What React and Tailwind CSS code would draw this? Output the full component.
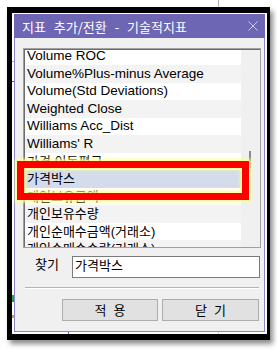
/**
 * Indicator add/switch dialog (지표 추가/전환) inside a framed screenshot,
 * with the selected row called out by a red highlight box.
 */

const ITEMS = [
  'Volume ROC',
  'Volume%Plus-minus Average',
  'Volume(Std Deviations)',
  'Weighted Close',
  'Williams Acc_Dist',
  "Williams' R",
  '가격 이동평균',
  '가격박스',
  '개인보유금액',
  '개인보유수량',
  '개인순매수금액(거래소)',
  '개인순매수수량(거래소)',
];

const SELECTED = 7;

function ListRow({ text, index }) {
  const korean = /[가-힣]/.test(text);
  const bg =
    index === SELECTED ? 'bg-[#d4dbea]' : index % 2 === 1 ? 'bg-[#f3f3f3]' : 'bg-white';
  return (
    <div
      className={`h-[17.5px] pl-[2px] flex items-center whitespace-nowrap text-black ${bg} ${
        korean ? 'text-[13px]' : 'text-[13.5px]'
      }`}
    >
      {text}
    </div>
  );
}

export default function App() {
  return (
    <div className="relative w-[277px] h-[350px] bg-white overflow-hidden pl-[7px] pt-[7px] font-['Liberation_Sans','Noto_Sans_CJK_KR',sans-serif]">
      {/* Black screenshot frame */}
      <div className="w-[263px] h-[333px] border-black border-l-[5px] border-t-[6px] border-r-[3px] border-b-[6px] bg-white pl-[2px] pt-[1px] pr-[2px] pb-[2px] shadow-[3px_4px_5px_rgba(0,0,0,0.45)]">
        <div className="h-full flex flex-col">
          {/* Title bar */}
          <div className="h-[24px] shrink-0 bg-[#6c66b4] flex items-center justify-between pl-[8px] pr-[7px]">
            <span className="text-white text-[13px] leading-none font-['Noto_Sans_CJK_KR',sans-serif] [word-spacing:5px] whitespace-pre">
              지표 추가/전환 - 기술적지표
            </span>
            <svg width="10" height="10" viewBox="0 0 10 10" className="text-[#cdc9ea]">
              <path d="M0.5 0.5 L9.5 9.5 M9.5 0.5 L0.5 9.5" stroke="currentColor" strokeWidth="1" />
            </svg>
          </div>

          {/* Body */}
          <div className="flex-1 flex flex-col bg-[#f0f0f0] border border-t-0 border-[#8b86c8]">
            {/* List box */}
            <div className="mt-[10px] ml-[8px] w-[238px] h-[200px] border border-[#a0a0a0] bg-white">
              <div className="h-full flex border-l border-t border-[#6d6d6d]">
                <div className="w-[216px] overflow-hidden">
                  <div className="-mt-[2.5px]">
                    {ITEMS.map((t, i) => (
                      <ListRow key={t} text={t} index={i} />
                    ))}
                  </div>
                </div>
                {/* Scroll track with thin thumb */}
                <div className="flex-1 bg-[#f0f0f0] pt-[101px]">
                  <div className="ml-[8px] w-[2px] h-[17px] bg-[#8a8a8a]" />
                </div>
              </div>
            </div>

            {/* Search row */}
            <div className="mt-[8px] flex items-start">
              <span className="ml-[20px] w-[25px] text-[13px] leading-[15px] text-black font-['Noto_Sans_CJK_KR',sans-serif]">
                찾기
              </span>
              <div className="ml-[12px] w-[188px] h-[22px] bg-white border border-[#7a7a7a] pl-[2px] text-[13px] leading-[15px] text-black font-['Noto_Sans_CJK_KR',sans-serif]">
                가격박스
              </div>
            </div>

            {/* Separator */}
            <div className="mt-[9px] ml-[10px] w-[234px] border-t border-[#b4b4b4] border-b border-b-white" />

            {/* Buttons */}
            <div className="mt-[10px] ml-[47px] flex gap-[4px]">
              <button className="w-[96px] h-[22px] bg-[#e1e1e1] border border-[#adadad] text-[13px] text-black font-['Noto_Sans_CJK_KR',sans-serif] [word-spacing:4px] whitespace-pre">
                적 용
              </button>
              <button className="w-[97px] h-[22px] bg-[#e1e1e1] border border-[#adadad] text-[13px] text-black font-['Noto_Sans_CJK_KR',sans-serif] [word-spacing:4px] whitespace-pre">
                닫 기
              </button>
            </div>
          </div>
        </div>
      </div>

      {/* Bits of the chart behind, showing between the frame and the dialog */}
      <div className="absolute left-[218px] top-0 w-px h-[7px] bg-[#b4b4b4]" />
      <div className="absolute left-[68px] top-[332px] w-px h-[2px] bg-[#4a78d0]" />
      <div className="absolute left-[218px] top-[332px] w-px h-[2px] bg-[#d0d0d0]" />
      <div className="absolute left-[12px] top-[61px] w-[2px] h-px bg-[#f0a030]" />
      <div className="absolute left-[12px] top-[81px] w-[2px] h-px bg-[#8040c0]" />
      <div className="absolute left-[12px] top-[295px] w-[2px] h-[7px] bg-[#20a040]" />
      <div className="absolute left-[12px] top-[315px] w-[2px] h-[3px] bg-[#e0a020]" />

      {/* Red call-out over the selected row */}
      <div className="absolute left-[17px] top-[161px] w-[232px] h-[39px] border-[7px] border-[#ff0000] shadow-[0_0_3px_2px_rgba(255,255,140,0.9),inset_0_0_3px_2px_rgba(255,255,140,0.9)]" />
    </div>
  );
}
